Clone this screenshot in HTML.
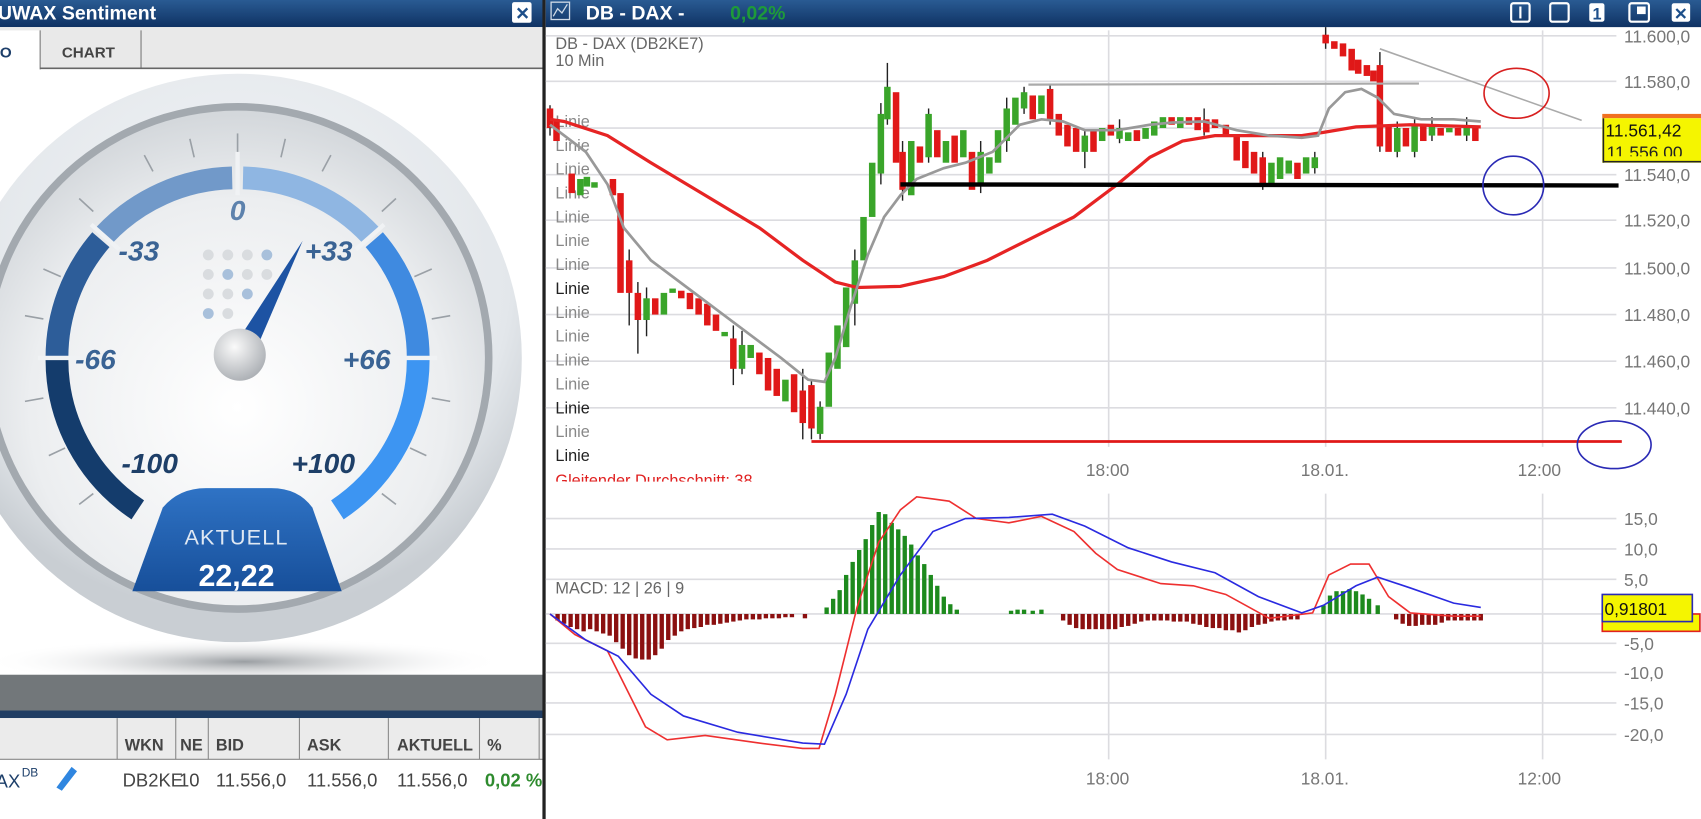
<!DOCTYPE html>
<html><head><meta charset="utf-8"><style>
html,body{margin:0;padding:0;background:#fff;overflow:hidden}
svg{display:block}
text{font-family:"Liberation Sans",sans-serif}
</style></head><body>
<svg width="1701" height="819" viewBox="0 0 1568 755" preserveAspectRatio="none" xmlns="http://www.w3.org/2000/svg">
<defs>
<linearGradient id="tb" x1="0" y1="0" x2="0" y2="1"><stop offset="0" stop-color="#2a5b93"/><stop offset="1" stop-color="#0f3263"/></linearGradient>
<radialGradient id="bez" cx="0.5" cy="0.35" r="0.6"><stop offset="0" stop-color="#f4f6f8"/><stop offset="0.8" stop-color="#e3e7eb"/><stop offset="1" stop-color="#c9ced3"/></radialGradient>
<radialGradient id="face" cx="0.5" cy="0.6" r="0.6"><stop offset="0" stop-color="#ffffff"/><stop offset="0.7" stop-color="#eceef0"/><stop offset="1" stop-color="#d3d7db"/></radialGradient>
<radialGradient id="hub" cx="0.4" cy="0.35" r="0.7"><stop offset="0" stop-color="#fafafa"/><stop offset="1" stop-color="#a9adb2"/></radialGradient>
<radialGradient id="sh" cx="0.5" cy="0.5" r="0.5"><stop offset="0" stop-color="#9a9ea2"/><stop offset="1" stop-color="#fff" stop-opacity="0"/></radialGradient>
<linearGradient id="ak" x1="0" y1="0" x2="0" y2="1"><stop offset="0" stop-color="#2f73c5"/><stop offset="1" stop-color="#174f9a"/></linearGradient>
</defs>

<!-- LEFT PANEL -->
<rect x="0" y="0" width="501" height="755" fill="#fff"/>
<rect x="0" y="0" width="501" height="25" fill="url(#tb)"/>
<text x="-2" y="18" font-size="18" font-weight="bold" fill="#fff">UWAX Sentiment</text>
<rect x="472" y="2" width="18" height="19" rx="2" fill="#fff"/>
<text x="475" y="18" font-size="16" font-weight="bold" fill="#1d4f8a">✕</text>
<rect x="0" y="25" width="501" height="38" fill="#e9e9e9"/>
<rect x="0" y="28" width="37" height="36" fill="#fff"/>
<line x1="37" y1="28" x2="37" y2="64" stroke="#777"/>
<line x1="130" y1="28" x2="130" y2="63" stroke="#777"/>
<line x1="37" y1="63" x2="501" y2="63" stroke="#666" stroke-width="1.5"/>
<text x="-4" y="53" font-size="14" font-weight="bold" fill="#1d3f6a">IO</text>
<text x="57" y="53" font-size="14" font-weight="bold" fill="#444">CHART</text>

<!-- gauge -->
<ellipse cx="225" cy="610" rx="240" ry="22" fill="url(#sh)"/>
<circle cx="219" cy="330" r="262" fill="url(#bez)"/>
<circle cx="219" cy="330" r="235" fill="#a3a9af"/>
<circle cx="219" cy="330" r="228" fill="url(#face)"/>
<g fill="none" stroke-width="21">
<path d="M52.5 330 A166.5 166.5 0 0 1 93 221" stroke="#2d5d99"/>
<path d="M52.5 330 A166.5 166.5 0 0 0 127 470" stroke="#143c6c"/>
<path d="M96 217 A166.5 166.5 0 0 1 214 164" stroke="#7199c9"/>
<path d="M224 164 A166.5 166.5 0 0 1 342 217" stroke="#8fb6e2"/>
<path d="M345 221 A166.5 166.5 0 0 1 385.5 330" stroke="#3f8ae0"/>
<path d="M385.5 330 A166.5 166.5 0 0 1 311 470" stroke="#3d95f2"/>
</g>
<g stroke="#f0f2f4" stroke-width="4"><line x1="35" y1="330" x2="75" y2="330"/><line x1="363" y1="330" x2="403" y2="330"/><line x1="219" y1="140" x2="219" y2="180"/><line x1="84" y1="207" x2="110" y2="230"/><line x1="354" y1="207" x2="328" y2="230"/></g>
<g stroke="#9aa0a6" stroke-width="1.5">
<line x1="219" y1="123" x2="219" y2="140"/><line x1="175" y1="128" x2="179" y2="145"/><line x1="263" y1="128" x2="259" y2="145"/>
<line x1="133" y1="143" x2="141" y2="158"/><line x1="305" y1="143" x2="297" y2="158"/>
<line x1="73" y1="183" x2="86" y2="195"/><line x1="365" y1="183" x2="352" y2="195"/>
<line x1="40" y1="248" x2="56" y2="255"/><line x1="398" y1="248" x2="382" y2="255"/>
<line x1="23" y1="291" x2="40" y2="294"/><line x1="415" y1="291" x2="398" y2="294"/>
<line x1="23" y1="370" x2="40" y2="367"/><line x1="415" y1="370" x2="398" y2="367"/>
<line x1="45" y1="420" x2="60" y2="413"/><line x1="393" y1="420" x2="378" y2="413"/>
<line x1="73" y1="465" x2="86" y2="455"/><line x1="365" y1="465" x2="352" y2="455"/>
</g>
<g font-size="26" font-style="italic" font-weight="bold" fill="#3a6394" text-anchor="middle">
<text x="219" y="203" fill="#5d82ad">0</text><text x="128" y="240">-33</text><text x="303" y="240">+33</text>
<text x="88" y="340">-66</text><text x="338" y="340">+66</text><text x="138" y="436" fill="#1e3f68">-100</text><text x="298" y="436" fill="#1e3f68">+100</text>
</g>
<g fill="#d9dcdf">
<circle cx="192" cy="235" r="5"/><circle cx="210" cy="235" r="5"/><circle cx="228" cy="235" r="5"/><circle cx="246" cy="235" r="5" fill="#a8c0db"/>
<circle cx="192" cy="253" r="5"/><circle cx="210" cy="253" r="5" fill="#a8c0db"/><circle cx="228" cy="253" r="5"/><circle cx="246" cy="253" r="5"/>
<circle cx="192" cy="271" r="5"/><circle cx="210" cy="271" r="5"/><circle cx="228" cy="271" r="5" fill="#a8c0db"/>
<circle cx="192" cy="289" r="5" fill="#a8c0db"/><circle cx="210" cy="289" r="5"/>
</g>
<path d="M225 305 L279 222 L240 313 Z" fill="#1d53a3"/>
<circle cx="221" cy="327" r="24" fill="url(#hub)"/>
<path d="M150 468 Q165 450 190 450 L250 450 Q275 450 288 468 L315 545 L122 545 Z" fill="url(#ak)"/>
<text x="218" y="502" font-size="20" fill="#dfe8f3" text-anchor="middle" letter-spacing="1">AKTUELL</text>
<text x="218" y="540" font-size="28" font-weight="bold" fill="#fff" text-anchor="middle">22,22</text>

<!-- bottom area left -->
<rect x="0" y="622" width="501" height="34" fill="#72777a"/>
<rect x="0" y="655" width="501" height="7" fill="#203d63"/>
<rect x="0" y="662" width="501" height="38" fill="#ebebeb"/>
<line x1="0" y1="700" x2="501" y2="700" stroke="#888"/>
<g stroke="#888"><line x1="108" y1="662" x2="108" y2="700"/><line x1="162" y1="662" x2="162" y2="700"/><line x1="192" y1="662" x2="192" y2="700"/><line x1="276" y1="662" x2="276" y2="700"/><line x1="358" y1="662" x2="358" y2="700"/><line x1="442" y1="662" x2="442" y2="700"/><line x1="497" y1="662" x2="497" y2="700"/></g>
<g font-size="15" font-weight="bold" fill="#444"><text x="115" y="692">WKN</text><text x="166" y="692">NE</text><text x="199" y="692">BID</text><text x="283" y="692">ASK</text><text x="366" y="692">AKTUELL</text><text x="449" y="692">%</text></g>
<rect x="0" y="701" width="501" height="30" fill="#fff"/>
<text x="-4" y="726" font-size="17" fill="#1d3f6a">AX</text><text x="20" y="716" font-size="11" fill="#1d3f6a">DB</text>
<path d="M52 726 L66 707 L71 711 L57 729 Z" fill="#2f86e0"/>
<g font-size="17" fill="#444"><text x="113" y="725">DB2KE</text><text x="165" y="725">10</text><text x="199" y="725">11.556,0</text><text x="283" y="725">11.556,0</text><text x="366" y="725">11.556,0</text></g>
<text x="447" y="725" font-size="17" font-weight="bold" fill="#2e8b2e">0,02 %</text>
<rect x="0" y="731" width="501" height="24" fill="#fff"/>

<!-- divider -->
<rect x="500" y="0" width="3" height="755" fill="#222"/>

<!-- RIGHT PANEL -->
<rect x="503" y="0" width="1065" height="25" fill="url(#tb)"/>
<rect x="508" y="2" width="17" height="16" fill="none" stroke="#cfd9e6" stroke-width="1.2"/>
<path d="M510 15 L514 8 L518 12 L523 4" stroke="#cfd9e6" fill="none" stroke-width="1.2"/>
<text x="540" y="18" font-size="18" font-weight="bold" fill="#fff">DB - DAX -</text>
<text x="673" y="18" font-size="18" font-weight="bold" fill="#1e9a3a">0,02%</text>
<g fill="none" stroke="#fff" stroke-width="2">
<rect x="1393" y="3" width="17" height="17" rx="2"/><line x1="1401.5" y1="6" x2="1401.5" y2="17"/>
<rect x="1429" y="3" width="17" height="17" rx="2"/>
<rect x="1502" y="3" width="18" height="17" rx="2"/><rect x="1509" y="6" width="8" height="7" fill="#fff" stroke="none"/>
</g>
<rect x="1465" y="3" width="14" height="17" rx="2" fill="#fff"/><text x="1468" y="18" font-size="15" font-weight="bold" fill="#1d4f8a">1</text>
<rect x="1541" y="3" width="17" height="17" rx="2" fill="#fff"/><text x="1543" y="18" font-size="15" font-weight="bold" fill="#1d4f8a">✕</text>

<!-- grids -->
<g stroke="#dcdce0" stroke-width="1.5">
<line x1="503" y1="33" x2="1490" y2="33"/><line x1="503" y1="75" x2="1490" y2="75"/><line x1="503" y1="118" x2="1490" y2="118"/><line x1="503" y1="161" x2="1490" y2="161"/><line x1="503" y1="203" x2="1490" y2="203"/><line x1="503" y1="247" x2="1490" y2="247"/><line x1="503" y1="290" x2="1490" y2="290"/><line x1="503" y1="333" x2="1490" y2="333"/><line x1="503" y1="376" x2="1490" y2="376"/>
<line x1="1022" y1="28" x2="1022" y2="412"/><line x1="1222" y1="28" x2="1222" y2="412"/><line x1="1422" y1="28" x2="1422" y2="412"/>
<line x1="503" y1="478" x2="1490" y2="478"/><line x1="503" y1="506" x2="1490" y2="506"/><line x1="503" y1="534" x2="1490" y2="534"/><line x1="503" y1="566" x2="1490" y2="566"/><line x1="503" y1="593" x2="1490" y2="593"/><line x1="503" y1="620" x2="1490" y2="620"/><line x1="503" y1="648" x2="1490" y2="648"/><line x1="503" y1="677" x2="1490" y2="677"/>
<line x1="1022" y1="455" x2="1022" y2="700"/><line x1="1222" y1="455" x2="1222" y2="700"/><line x1="1422" y1="455" x2="1422" y2="700"/>
</g>
<g font-size="16" fill="#777">
<text x="1497" y="39">11.600,0</text><text x="1497" y="81">11.580,0</text><text x="1497" y="167">11.540,0</text><text x="1497" y="209">11.520,0</text><text x="1497" y="253">11.500,0</text><text x="1497" y="296">11.480,0</text><text x="1497" y="339">11.460,0</text><text x="1497" y="382">11.440,0</text>
<text x="1001" y="439">18:00</text><text x="1199" y="439">18.01.</text><text x="1399" y="439">12:00</text>
<text x="1001" y="723">18:00</text><text x="1199" y="723">18.01.</text><text x="1399" y="723">12:00</text>
<text x="1497" y="484">15,0</text><text x="1497" y="512">10,0</text><text x="1497" y="540">5,0</text><text x="1497" y="599">-5,0</text><text x="1497" y="626">-10,0</text><text x="1497" y="654">-15,0</text><text x="1497" y="683">-20,0</text>
</g>
<text x="512" y="45" font-size="15" fill="#666">DB - DAX (DB2KE7)</text>
<text x="512" y="61" font-size="15" fill="#666">10 Min</text>
<g font-size="15" fill="#888">
<text x="512" y="117">Linie</text><text x="512" y="139">Linie</text><text x="512" y="161">Linie</text><text x="512" y="183">Linie</text><text x="512" y="205">Linie</text><text x="512" y="227">Linie</text><text x="512" y="249">Linie</text><text x="512" y="271" fill="#222">Linie</text><text x="512" y="293">Linie</text><text x="512" y="315">Linie</text><text x="512" y="337">Linie</text><text x="512" y="359">Linie</text><text x="512" y="381" fill="#222">Linie</text><text x="512" y="403">Linie</text><text x="512" y="425" fill="#222">Linie</text>
</g>
<svg x="503" y="430" width="300" height="14" overflow="hidden"><text x="9" y="18" font-size="15" fill="#e02020">Gleitender Durchschnitt: 38</text></svg>
<text x="512" y="547" font-size="15" fill="#666">MACD: 12 | 26 | 9</text>

<!-- candles -->
<g stroke-width="1.3">
<g stroke="#222">
<line x1="507" y1="97" x2="507" y2="125"/><line x1="588" y1="260" x2="588" y2="326"/><line x1="580" y1="230" x2="580" y2="300"/><line x1="596" y1="265" x2="596" y2="310"/><line x1="676" y1="300" x2="676" y2="355"/><line x1="684" y1="305" x2="684" y2="345"/><line x1="740" y1="340" x2="740" y2="405"/><line x1="748" y1="350" x2="748" y2="405"/><line x1="756" y1="370" x2="756" y2="405"/><line x1="788" y1="230" x2="788" y2="300"/><line x1="812" y1="95" x2="812" y2="170"/><line x1="818" y1="58" x2="818" y2="115"/><line x1="832" y1="130" x2="832" y2="185"/><line x1="856" y1="100" x2="856" y2="150"/><line x1="904" y1="130" x2="904" y2="178"/><line x1="928" y1="90" x2="928" y2="140"/><line x1="944" y1="80" x2="944" y2="105"/><line x1="968" y1="78" x2="968" y2="115"/><line x1="1000" y1="120" x2="1000" y2="155"/><line x1="1164" y1="140" x2="1164" y2="175"/><line x1="1222" y1="25" x2="1222" y2="45"/><line x1="1272" y1="48" x2="1272" y2="140"/><line x1="1288" y1="112" x2="1288" y2="145"/><line x1="1304" y1="110" x2="1304" y2="145"/><line x1="1320" y1="108" x2="1320" y2="130"/><line x1="1352" y1="108" x2="1352" y2="130"/><line x1="1212" y1="140" x2="1212" y2="160"/><line x1="1110" y1="100" x2="1110" y2="125"/><line x1="1032" y1="110" x2="1032" y2="132"/>
</g>
<g fill="#e01818">
<rect x="504" y="100" width="6" height="18"/><rect x="510" y="110" width="6" height="20"/><rect x="524" y="160" width="6" height="18"/><rect x="562" y="165" width="6" height="15"/><rect x="569" y="178" width="6" height="92"/><rect x="577" y="240" width="6" height="30"/><rect x="585" y="270" width="6" height="25"/><rect x="601" y="275" width="6" height="15"/><rect x="625" y="268" width="6" height="7"/><rect x="633" y="270" width="6" height="15"/><rect x="641" y="275" width="6" height="15"/><rect x="649" y="280" width="6" height="20"/><rect x="657" y="290" width="6" height="15"/><rect x="673" y="312" width="6" height="28"/><rect x="697" y="325" width="6" height="20"/><rect x="705" y="330" width="6" height="30"/><rect x="713" y="340" width="6" height="25"/><rect x="729" y="345" width="6" height="35"/><rect x="737" y="360" width="6" height="30"/><rect x="745" y="355" width="6" height="40"/>
<rect x="823" y="85" width="6" height="65"/><rect x="829" y="140" width="6" height="35"/><rect x="845" y="135" width="6" height="15"/><rect x="861" y="120" width="6" height="25"/><rect x="877" y="125" width="6" height="25"/><rect x="893" y="140" width="6" height="35"/><rect x="949" y="88" width="6" height="22"/><rect x="965" y="82" width="6" height="28"/><rect x="973" y="105" width="6" height="20"/><rect x="981" y="115" width="6" height="20"/><rect x="989" y="118" width="6" height="22"/><rect x="1005" y="120" width="6" height="20"/><rect x="1021" y="115" width="6" height="10"/><rect x="1045" y="120" width="6" height="10"/><rect x="1077" y="108" width="6" height="7"/><rect x="1093" y="108" width="6" height="7"/><rect x="1101" y="108" width="6" height="12"/><rect x="1109" y="110" width="6" height="12"/><rect x="1117" y="110" width="6" height="8"/><rect x="1127" y="115" width="6" height="10"/><rect x="1137" y="125" width="6" height="23"/><rect x="1145" y="130" width="6" height="25"/><rect x="1153" y="140" width="6" height="20"/><rect x="1161" y="145" width="6" height="27"/><rect x="1193" y="150" width="6" height="15"/>
<rect x="1219" y="32" width="6" height="8"/><rect x="1227" y="38" width="6" height="7"/><rect x="1235" y="40" width="6" height="12"/><rect x="1243" y="45" width="6" height="20"/><rect x="1249" y="55" width="6" height="13"/><rect x="1257" y="60" width="6" height="10"/><rect x="1263" y="65" width="6" height="10"/><rect x="1269" y="60" width="6" height="75"/><rect x="1277" y="115" width="6" height="25"/><rect x="1293" y="118" width="6" height="17"/><rect x="1309" y="115" width="6" height="15"/><rect x="1325" y="118" width="6" height="7"/><rect x="1341" y="118" width="6" height="7"/><rect x="1357" y="118" width="6" height="12"/>
</g>
<g fill="#3aa52a">
<rect x="532" y="165" width="6" height="15"/><rect x="538" y="163" width="6" height="9"/><rect x="545" y="168" width="6" height="5"/><rect x="593" y="275" width="6" height="20"/><rect x="609" y="270" width="6" height="20"/><rect x="617" y="266" width="6" height="4"/><rect x="665" y="306" width="6" height="4"/><rect x="681" y="318" width="6" height="22"/><rect x="689" y="318" width="6" height="12"/><rect x="721" y="350" width="6" height="20"/><rect x="753" y="375" width="6" height="25"/><rect x="761" y="325" width="6" height="50"/><rect x="769" y="300" width="6" height="40"/><rect x="777" y="265" width="6" height="55"/><rect x="785" y="240" width="6" height="40"/><rect x="793" y="200" width="6" height="40"/><rect x="801" y="150" width="6" height="50"/><rect x="809" y="105" width="6" height="55"/><rect x="815" y="80" width="6" height="30"/>
<rect x="837" y="130" width="6" height="50"/><rect x="853" y="105" width="6" height="40"/><rect x="869" y="130" width="6" height="20"/><rect x="885" y="120" width="6" height="25"/><rect x="901" y="140" width="6" height="30"/><rect x="909" y="145" width="6" height="15"/><rect x="917" y="120" width="6" height="30"/><rect x="925" y="100" width="6" height="30"/><rect x="933" y="90" width="6" height="25"/><rect x="941" y="85" width="6" height="15"/><rect x="957" y="88" width="6" height="17"/><rect x="997" y="125" width="6" height="15"/><rect x="1013" y="118" width="6" height="12"/><rect x="1029" y="118" width="6" height="10"/><rect x="1037" y="122" width="6" height="8"/><rect x="1053" y="118" width="6" height="10"/><rect x="1061" y="112" width="6" height="13"/><rect x="1069" y="108" width="6" height="10"/><rect x="1085" y="108" width="6" height="10"/><rect x="1169" y="150" width="6" height="20"/><rect x="1177" y="145" width="6" height="20"/><rect x="1185" y="148" width="6" height="12"/><rect x="1201" y="145" width="6" height="15"/><rect x="1209" y="145" width="6" height="10"/>
<rect x="1285" y="118" width="6" height="22"/><rect x="1301" y="115" width="6" height="25"/><rect x="1317" y="115" width="6" height="10"/><rect x="1349" y="118" width="6" height="7"/><rect x="1333" y="118" width="6" height="4"/>
</g>
</g>
<!-- MAs -->
<polyline fill="none" stroke="#e62424" stroke-width="3" points="507,110 520,112 560,125 600,150 650,180 700,210 740,240 770,260 790,265 830,264 870,255 910,240 950,220 990,200 1030,170 1060,145 1090,130 1120,125 1160,125 1200,125 1220,122 1250,117 1300,115 1365,117"/>
<polyline fill="none" stroke="#999" stroke-width="2.5" points="507,115 540,140 560,170 575,210 600,240 640,270 680,300 720,330 745,350 760,352 770,330 785,280 800,235 815,200 830,180 845,165 870,155 890,150 915,140 940,115 960,110 980,112 1000,120 1030,120 1060,115 1080,113 1110,112 1140,120 1170,125 1200,127 1215,125 1225,100 1240,85 1255,82 1270,90 1285,105 1310,110 1340,110 1365,112"/>
<line x1="948" y1="78" x2="1308" y2="77" stroke="#aaa" stroke-width="2"/>
<line x1="1272" y1="45" x2="1458" y2="111" stroke="#aaa" stroke-width="1.5"/>
<line x1="830" y1="170" x2="1492" y2="171" stroke="#000" stroke-width="4"/>
<line x1="748" y1="407" x2="1495" y2="407" stroke="#e01818" stroke-width="2.5"/>
<ellipse cx="1398" cy="86" rx="30" ry="23" fill="none" stroke="#d82020" stroke-width="1.5"/>
<ellipse cx="1395" cy="171" rx="28" ry="27" fill="none" stroke="#2a2ab5" stroke-width="1.5"/>
<ellipse cx="1488" cy="410" rx="34" ry="22" fill="none" stroke="#2a2ab5" stroke-width="1.5"/>
<!-- price labels -->
<rect x="1477" y="105" width="91" height="4" fill="#f07020"/>
<rect x="1477" y="109" width="91" height="41" fill="#f5f500"/>
<line x1="1478" y1="109" x2="1478" y2="150" stroke="#222" stroke-width="1.5"/>
<line x1="1478" y1="149" x2="1568" y2="149" stroke="#222" stroke-width="1.5"/>
<svg x="1477" y="132" width="91" height="12" overflow="hidden"><text x="4" y="14" font-size="16" fill="#222">11.556,00</text></svg>
<text x="1480" y="126" font-size="16" fill="#111">11.561,42</text>
<!-- MACD histogram -->
<g fill="#8b1010">
<rect x="512" y="566" width="4" height="6"/><rect x="518" y="566" width="4" height="9"/><rect x="524" y="566" width="4" height="12"/><rect x="530" y="566" width="4" height="14"/><rect x="536" y="566" width="4" height="16"/><rect x="542" y="566" width="4" height="14"/><rect x="548" y="566" width="4" height="16"/><rect x="554" y="566" width="4" height="18"/><rect x="560" y="566" width="4" height="20"/><rect x="566" y="566" width="4" height="26"/><rect x="572" y="566" width="4" height="32"/><rect x="578" y="566" width="4" height="38"/><rect x="584" y="566" width="4" height="41"/><rect x="590" y="566" width="4" height="42"/><rect x="596" y="566" width="4" height="42"/><rect x="602" y="566" width="4" height="38"/><rect x="608" y="566" width="4" height="32"/><rect x="614" y="566" width="4" height="24"/><rect x="620" y="566" width="4" height="20"/><rect x="626" y="566" width="4" height="16"/><rect x="632" y="566" width="4" height="14"/><rect x="638" y="566" width="4" height="13"/><rect x="644" y="566" width="4" height="12"/><rect x="650" y="566" width="4" height="10"/><rect x="656" y="566" width="4" height="10"/><rect x="662" y="566" width="4" height="9"/><rect x="668" y="566" width="4" height="8"/><rect x="674" y="566" width="4" height="7"/><rect x="680" y="566" width="4" height="6"/><rect x="686" y="566" width="4" height="5"/><rect x="692" y="566" width="4" height="5"/><rect x="698" y="566" width="4" height="5"/><rect x="704" y="566" width="4" height="4"/><rect x="710" y="566" width="4" height="4"/><rect x="716" y="566" width="4" height="4"/><rect x="722" y="566" width="4" height="3"/><rect x="728" y="566" width="4" height="3"/><rect x="740" y="566" width="4" height="4"/>
<rect x="978" y="566" width="4" height="6"/><rect x="984" y="566" width="4" height="10"/><rect x="990" y="566" width="4" height="13"/><rect x="996" y="566" width="4" height="14"/><rect x="1002" y="566" width="4" height="14"/><rect x="1008" y="566" width="4" height="14"/><rect x="1014" y="566" width="4" height="14"/><rect x="1020" y="566" width="4" height="14"/><rect x="1026" y="566" width="4" height="14"/><rect x="1032" y="566" width="4" height="12"/><rect x="1038" y="566" width="4" height="11"/><rect x="1044" y="566" width="4" height="9"/><rect x="1050" y="566" width="4" height="7"/><rect x="1056" y="566" width="4" height="6"/><rect x="1062" y="566" width="4" height="6"/><rect x="1068" y="566" width="4" height="6"/><rect x="1074" y="566" width="4" height="6"/><rect x="1080" y="566" width="4" height="7"/><rect x="1086" y="566" width="4" height="7"/><rect x="1092" y="566" width="4" height="7"/><rect x="1098" y="566" width="4" height="9"/><rect x="1104" y="566" width="4" height="10"/><rect x="1110" y="566" width="4" height="12"/><rect x="1116" y="566" width="4" height="13"/><rect x="1122" y="566" width="4" height="13"/><rect x="1128" y="566" width="4" height="15"/><rect x="1134" y="566" width="4" height="15"/><rect x="1140" y="566" width="4" height="17"/><rect x="1146" y="566" width="4" height="15"/><rect x="1152" y="566" width="4" height="12"/><rect x="1158" y="566" width="4" height="10"/><rect x="1164" y="566" width="4" height="9"/><rect x="1170" y="566" width="4" height="7"/><rect x="1176" y="566" width="4" height="6"/><rect x="1182" y="566" width="4" height="6"/><rect x="1188" y="566" width="4" height="5"/><rect x="1194" y="566" width="4" height="5"/>
<rect x="1285" y="566" width="4" height="5"/><rect x="1291" y="566" width="4" height="9"/><rect x="1297" y="566" width="4" height="11"/><rect x="1303" y="566" width="4" height="11"/><rect x="1309" y="566" width="4" height="10"/><rect x="1315" y="566" width="4" height="10"/><rect x="1321" y="566" width="4" height="10"/><rect x="1327" y="566" width="4" height="8"/><rect x="1333" y="566" width="4" height="6"/><rect x="1339" y="566" width="4" height="6"/><rect x="1345" y="566" width="4" height="6"/><rect x="1351" y="566" width="4" height="6"/><rect x="1357" y="566" width="4" height="6"/><rect x="1363" y="566" width="4" height="6"/>
</g>
<g fill="#1d8a1d">
<rect x="760" y="560" width="4" height="6"/><rect x="766" y="552" width="4" height="14"/><rect x="772" y="544" width="4" height="22"/><rect x="778" y="530" width="4" height="36"/><rect x="784" y="518" width="4" height="48"/><rect x="790" y="507" width="4" height="59"/><rect x="796" y="497" width="4" height="69"/><rect x="802" y="484" width="4" height="82"/><rect x="808" y="472" width="4" height="94"/><rect x="814" y="474" width="4" height="92"/><rect x="820" y="482" width="4" height="84"/><rect x="826" y="488" width="4" height="78"/><rect x="832" y="494" width="4" height="72"/><rect x="838" y="502" width="4" height="64"/><rect x="844" y="512" width="4" height="54"/><rect x="850" y="520" width="4" height="46"/><rect x="856" y="530" width="4" height="36"/><rect x="862" y="540" width="4" height="26"/><rect x="868" y="550" width="4" height="16"/><rect x="874" y="557" width="4" height="9"/><rect x="880" y="562" width="4" height="4"/>
<rect x="930" y="563" width="4" height="3"/><rect x="936" y="562" width="4" height="4"/><rect x="942" y="562" width="4" height="4"/><rect x="950" y="563" width="4" height="3"/><rect x="958" y="562" width="4" height="4"/>
<rect x="1218" y="558" width="4" height="8"/><rect x="1224" y="549" width="4" height="17"/><rect x="1230" y="545" width="4" height="21"/><rect x="1236" y="545" width="4" height="21"/><rect x="1242" y="543" width="4" height="23"/><rect x="1248" y="545" width="4" height="21"/><rect x="1254" y="548" width="4" height="18"/><rect x="1260" y="552" width="4" height="14"/><rect x="1268" y="558" width="4" height="8"/>
</g>
<polyline fill="none" stroke="#ee3030" stroke-width="1.5" points="507,566 530,585 560,600 575,630 595,670 615,682 650,678 700,685 740,690 755,690 770,640 790,560 810,500 830,470 845,458 860,460 875,462 900,478 930,482 960,476 990,490 1010,510 1030,525 1070,538 1100,540 1130,548 1170,570 1210,565 1225,530 1245,520 1262,520 1280,550 1300,565 1340,568 1365,568"/>
<polyline fill="none" stroke="#2a2ae0" stroke-width="1.5" points="507,566 540,590 570,605 600,640 630,660 680,675 740,685 760,686 780,640 800,580 830,530 860,490 890,478 930,477 970,474 1000,485 1040,505 1080,518 1120,528 1160,550 1200,565 1220,558 1250,540 1270,532 1300,542 1340,556 1365,560"/>
<rect x="1477" y="566" width="90" height="16" fill="#f5f500" stroke="#e02020" stroke-width="1.5"/>
<rect x="1477" y="548" width="83" height="25" fill="#f5f500" stroke="#2a2ab5" stroke-width="1.5"/>
<text x="1479" y="567" font-size="16" fill="#111">0,91801</text>
</svg>
</body></html>
